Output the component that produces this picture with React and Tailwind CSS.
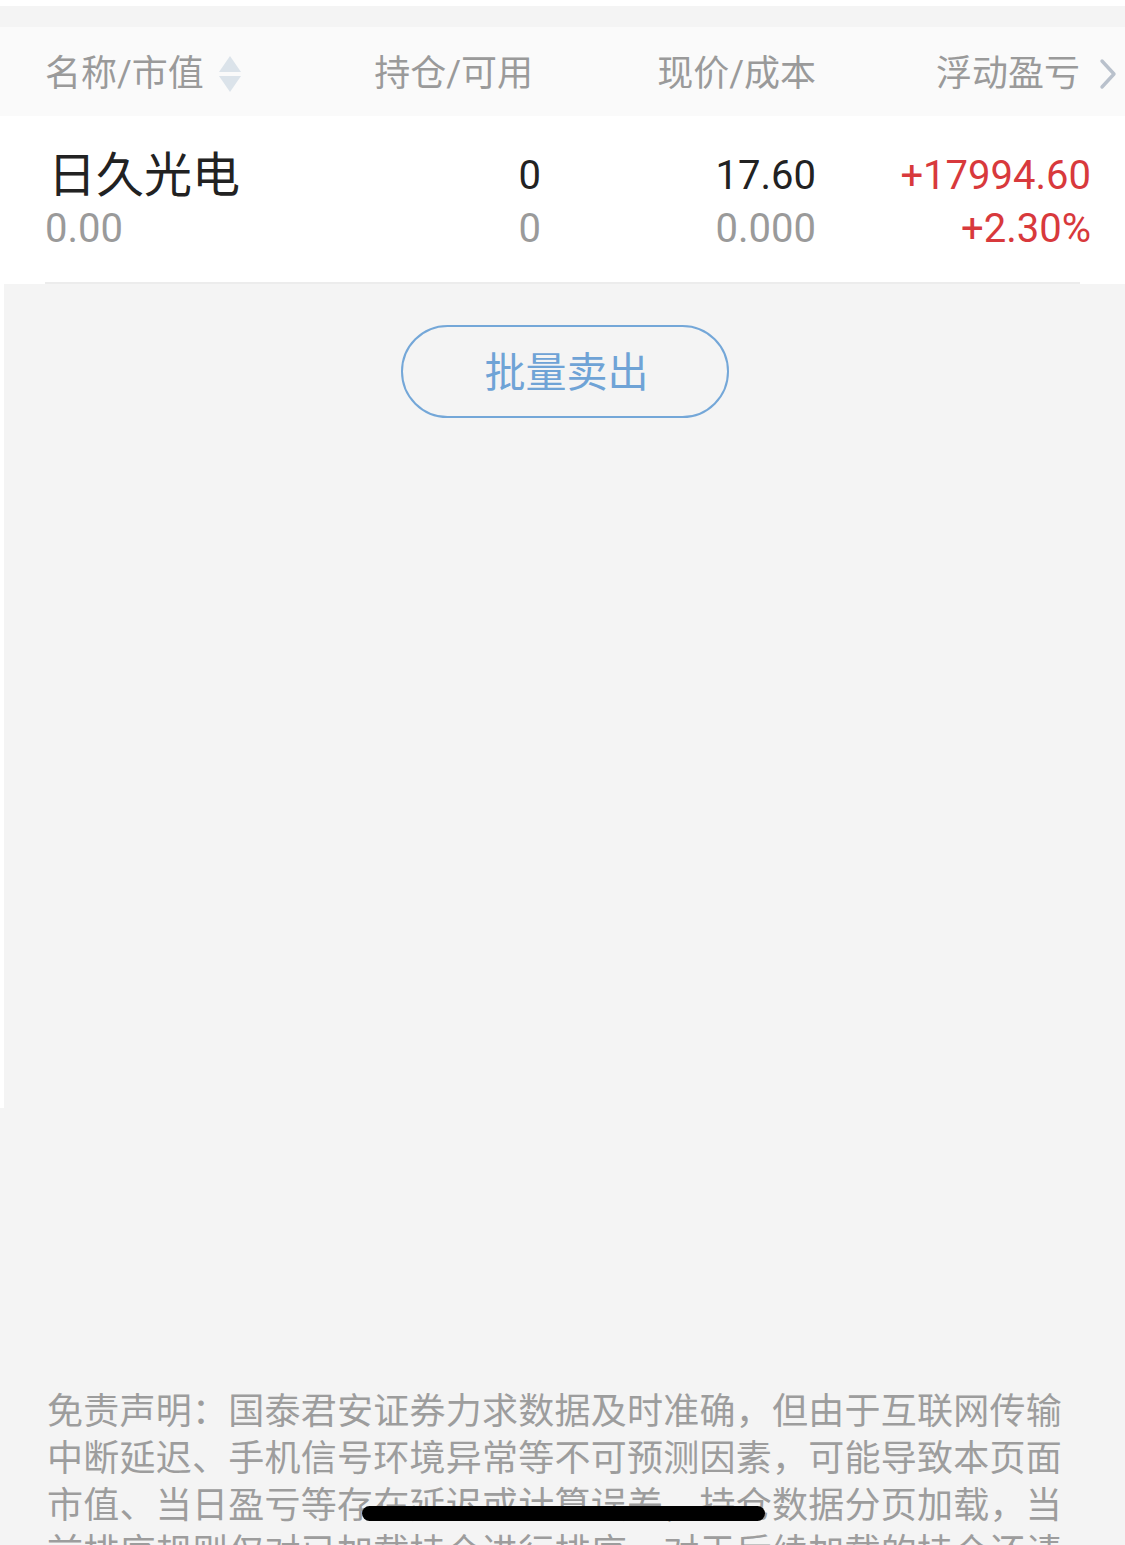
import React from "react";

const cjk = { fontFamily: 'Roboto, "Noto Sans CJK SC", sans-serif' };

function SortIcon() {
  return (
    <svg width="26" height="40" viewBox="0 0 26 40" className="ml-[13px]">
      <polygon points="13,2 24,18 2,18" fill="#dbe3ea" />
      <polygon points="2,22 24,22 13,38" fill="#dbe3ea" />
    </svg>
  );
}

function Chevron() {
  return (
    <svg width="20" height="32" viewBox="0 0 20 32" className="ml-[18px]">
      <polyline points="4,3 16,16 4,29" fill="none" stroke="#b9c1cc" strokeWidth="3.4" strokeLinecap="round" strokeLinejoin="round" />
    </svg>
  );
}

export default function App() {
  return (
    <div className="relative w-[1125px] bg-white" style={cjk}>
      <div className="h-[6px] bg-white" />
      <div className="h-[21px] bg-[#f4f4f4]" />
      {/* Header */}
      <div className="flex h-[89px] items-center bg-[#fafafa] pl-[45px] pt-[5px] text-[36px] leading-none text-[#9a9a9a]">
        <div className="flex w-[221px] items-center">
          <span>名称/市值</span>
          <SortIcon />
        </div>
        <div className="w-[267px] text-right">持仓/可用</div>
        <div className="w-[283px] text-right">现价/成本</div>
        <div className="flex w-[302px] items-center justify-end">
          <span>浮动盈亏</span>
          <Chevron />
        </div>
      </div>
      {/* Row */}
      <div className="bg-white">
        <div className="flex h-[166px] items-center pl-[45px] pr-[34px] pt-[3px]">
          <div className="flex w-[221px] flex-col">
            <span className="pl-[3px] text-[48px] leading-[54px] text-[#222]">日久光电</span>
            <span className="mt-[2px] text-[40px] leading-[48px] text-[#9a9a9a]">0.00</span>
          </div>
          <div className="flex w-[275px] flex-col items-end">
            <span className="text-[40px] leading-[54px] text-[#222]">0</span>
            <span className="mt-[2px] text-[40px] leading-[48px] text-[#9a9a9a]">0</span>
          </div>
          <div className="flex w-[275px] flex-col items-end">
            <span className="text-[40px] leading-[54px] text-[#222]">17.60</span>
            <span className="mt-[2px] text-[40px] leading-[48px] text-[#9a9a9a]">0.000</span>
          </div>
          <div className="flex w-[275px] flex-col items-end">
            <span className="text-[40px] leading-[54px] text-[#d8393c]">+17994.60</span>
            <span className="mt-[2px] text-[40px] leading-[48px] text-[#d8393c]">+2.30%</span>
          </div>
        </div>
        <div className="ml-[45px] h-[2px] w-[1035px] bg-[#ececec]" />
      </div>
      {/* Body */}
      <div className="bg-[#f4f4f4]">
        <div className="flex h-[824px] flex-col items-center border-l-[4px] border-white pt-[41px]">
          <button className="flex h-[93px] w-[328px] items-center justify-center rounded-full border-[2.5px] border-[#74a7d8] pl-[4px] pt-[4px] text-[41px] text-[#6fa3d6]">
            批量卖出
          </button>
        </div>
        <div className="pl-[47px] pr-[47px] pt-[281px] pb-[60px]">
          <p className="text-[36px] leading-[47px] tracking-[0.25px] text-[#9d9d9d]">
            免责声明：国泰君安证券力求数据及时准确，但由于互联网传输中断延迟、手机信号环境异常等不可预测因素，可能导致本页面市值、当日盈亏等存在延迟或计算误差，持仓数据分页加载，当前排序规则仅对已加载持仓进行排序，对于后续加载的持仓还请下拉加载后再进行排序。
          </p>
        </div>
      </div>
      <div className="fixed bottom-[24px] left-[362px] h-[15px] w-[403px] rounded-full bg-black" />
    </div>
  );
}
